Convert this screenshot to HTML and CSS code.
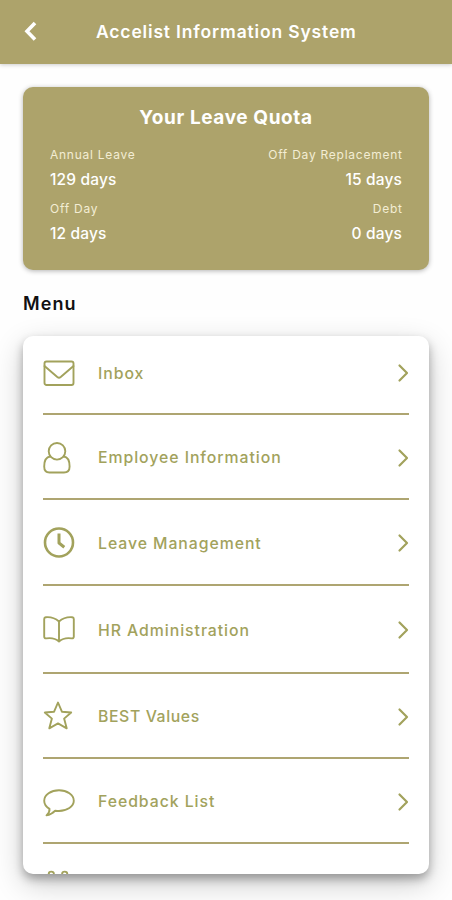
FILE: index.html
```
<!DOCTYPE html>
<html lang="en">
<head>
    <meta charset="UTF-8">
    <meta name="viewport" content="width=device-width, initial-scale=1.0">
    <title>Accelist Information System</title>
    <link rel="stylesheet" href="styles.css">
</head>
<body>
    <header class="header">
        <svg class="back" width="14" height="22" viewBox="0 0 14 22"><path d="M12 2L4 10.3L12 18.6"/></svg>
        <h1>Accelist Information System</h1>
    </header>

    <main class="content">
        <section class="quota">
            <h2>Your Leave Quota</h2>
            <div class="quota-grid">
                <div class="quota-item">
                    <div class="label">Annual Leave</div>
                    <div class="value">129 days</div>
                </div>
                <div class="quota-item right">
                    <div class="label">Off Day Replacement</div>
                    <div class="value">15 days</div>
                </div>
                <div class="quota-item">
                    <div class="label">Off Day</div>
                    <div class="value">12 days</div>
                </div>
                <div class="quota-item right">
                    <div class="label">Debt</div>
                    <div class="value">0 days</div>
                </div>
            </div>
        </section>

        <h3 class="menu-title">Menu</h3>

        <nav class="menu">
            <a class="menu-item first">
                <svg class="icon" viewBox="0 0 32 32"><rect x="1.5" y="4.5" width="29" height="23.5" rx="2"/><path d="M1.5 9L14.3 20Q16 21.3 17.7 20L30.5 9"/></svg>
                <span>Inbox</span>
                <svg class="arrow" viewBox="0 0 12 20"><path d="M2.5 2.5L10 10L2.5 17.5"/></svg>
            </a>
            <a class="menu-item">
                <svg class="icon" viewBox="0 0 32 32"><circle cx="14" cy="9.3" r="8.3"/><path d="M7.3 14.5C3.2 15 1.2 19 1.2 24.5C1.2 28.3 3.2 30.5 6.5 30.5H21C24.5 30.5 26.6 28.3 26.6 24.5C26.6 19 24.8 15 20.7 14.5"/></svg>
                <span>Employee Information</span>
                <svg class="arrow" viewBox="0 0 12 20"><path d="M2.5 2.5L10 10L2.5 17.5"/></svg>
            </a>
            <a class="menu-item clock">
                <svg class="icon" viewBox="0 0 32 32"><circle class="bold" cx="16" cy="15.5" r="14"/><path class="hand" d="M16 6.5V16L21.3 20.2"/></svg>
                <span>Leave Management</span>
                <svg class="arrow" viewBox="0 0 12 20"><path d="M2.5 2.5L10 10L2.5 17.5"/></svg>
            </a>
            <a class="menu-item book">
                <svg class="icon" viewBox="0 0 32 32"><path d="M16 7.5C12 4 7 2.8 2.8 3.2Q1.2 3.4 1.2 5V22.5Q1.2 24.6 3.3 24.4C8 23.7 12 24 16 27.5C20 24 24 23.7 28.7 24.4Q30.8 24.6 30.8 22.5V5Q30.8 3.4 29.2 3.2C25 2.8 20 4 16 7.5V27"/></svg>
                <span>HR Administration</span>
                <svg class="arrow" viewBox="0 0 12 20"><path d="M2.5 2.5L10 10L2.5 17.5"/></svg>
            </a>
            <a class="menu-item">
                <svg class="icon" viewBox="0 0 32 32"><path d="M15 1.5L18.9 10.7L28.2 11.5L21.1 17.6L23.7 27.3L15 22.4L6.3 27.3L8.9 17.6L1.8 11.5L11.1 10.7Z"/></svg>
                <span class="tight">BEST Values</span>
                <svg class="arrow" viewBox="0 0 12 20"><path d="M2.5 2.5L10 10L2.5 17.5"/></svg>
            </a>
            <a class="menu-item">
                <svg class="icon" viewBox="0 0 32 32"><path d="M16 4.2C24 4.2 30.8 9 30.8 14.8S24 25 16 25Q14 25 12.2 24.7Q8.5 28.7 3.5 29.4C5.8 27.4 6.8 25.5 6.5 22.9C3.2 21 1.2 18 1.2 14.8C1.2 9 8 4.2 16 4.2Z"/></svg>
                <span>Feedback List</span>
                <svg class="arrow" viewBox="0 0 12 20"><path d="M2.5 2.5L10 10L2.5 17.5"/></svg>
            </a>
            <a class="menu-item">
                <svg class="icon" viewBox="0 0 32 32"><path d="M5.7 9V3.2Q5.7 0.6 8.3 0.6T10.9 3.2V9M19.1 9V3.2Q19.1 0.6 21.7 0.6T24.3 3.2V9M10.9 5.5H19.1M5.7 5.5H2V30H29V5.5H24.3"/></svg>
            </a>
        </nav>
    </main>
</body>
</html>
```
FILE: styles.css
```
* {
    box-sizing: border-box;
}
body {
    margin: 0;
    height: 900px;
    font-family: Inter, "Open Sans", sans-serif;
    background: #fefefe;
    overflow: hidden;
}
h1, h2, h3 {
    margin: 0;
}
svg {
    fill: none;
    stroke: #a2a25c;
    stroke-width: 1.9;
    stroke-linecap: round;
    stroke-linejoin: round;
    overflow: visible;
}
.header {
    display: flex;
    align-items: center;
    height: 64px;
    padding: 0 0 1px 23px;
    background: #ada36b;
    box-shadow: 0 1px 4px rgba(0, 0, 0, 0.2);
}
.header .back {
    stroke: #fff;
    stroke-width: 3.6;
    stroke-linecap: butt;
    stroke-linejoin: miter;
}
.header h1 {
    margin-left: 59px;
    color: #fff;
    font-size: 17.5px;
    font-weight: 600;
    letter-spacing: 0.84px;
    white-space: nowrap;
}
.content {
    padding: 23px 23px 0;
}
.quota {
    height: 183px;
    padding: 19px 27px 0;
    border-radius: 10px;
    background: #ada36b;
    color: #fff;
    box-shadow: 0 1px 5px rgba(0, 0, 0, 0.3);
}
.quota h2 {
    font-size: 19px;
    line-height: 24px;
    font-weight: 700;
    letter-spacing: 0.6px;
    text-align: center;
}
.quota-grid {
    display: grid;
    grid-template-columns: auto auto;
    justify-content: space-between;
    margin-top: 14px;
}
.quota-item {
    height: 54px;
}
.right {
    text-align: right;
}
.label {
    font-size: 12px;
    line-height: 22px;
    letter-spacing: 0.75px;
    margin-right: -0.7px;
    color: #f3edd4;
}
.value {
    font-size: 15.5px;
    line-height: 28px;
    font-weight: 500;
    letter-spacing: 0.15px;
}
.menu-title {
    margin-top: 22px;
    font-size: 18px;
    line-height: 24px;
    font-weight: 600;
    letter-spacing: 1.1px;
    color: #111;
}
.menu {
    height: 538px;
    margin-top: 20px;
    padding: 0 20px;
    border-radius: 10px;
    background: #fff;
    box-shadow: 0 5px 10px rgba(0, 0, 0, 0.3), 0 10px 30px rgba(0, 0, 0, 0.2);
    overflow: hidden;
}
.menu-item {
    display: flex;
    align-items: center;
    height: 85px;
    padding-top: 2px;
    border-bottom: 2px solid #aea571;
    color: #a2a25c;
    font-size: 15.8px;
    font-weight: 500;
    letter-spacing: 0.95px;
}
.menu-item.first {
    height: 79px;
    padding: 0 0 3px;
}
.menu-item.clock {
    height: 86px;
}
.menu-item.book {
    height: 88px;
}
.menu-item span {
    flex: 1;
    margin-left: 23px;
}
.menu-item .tight {
    letter-spacing: 0.6px;
}
.icon {
    width: 32px;
    height: 32px;
}
.icon .bold {
    stroke-width: 2.6;
}
.icon .hand {
    stroke-width: 3;
    stroke-linecap: butt;
}
.arrow {
    width: 12px;
    height: 20px;
    stroke-width: 2.2;
}
```
